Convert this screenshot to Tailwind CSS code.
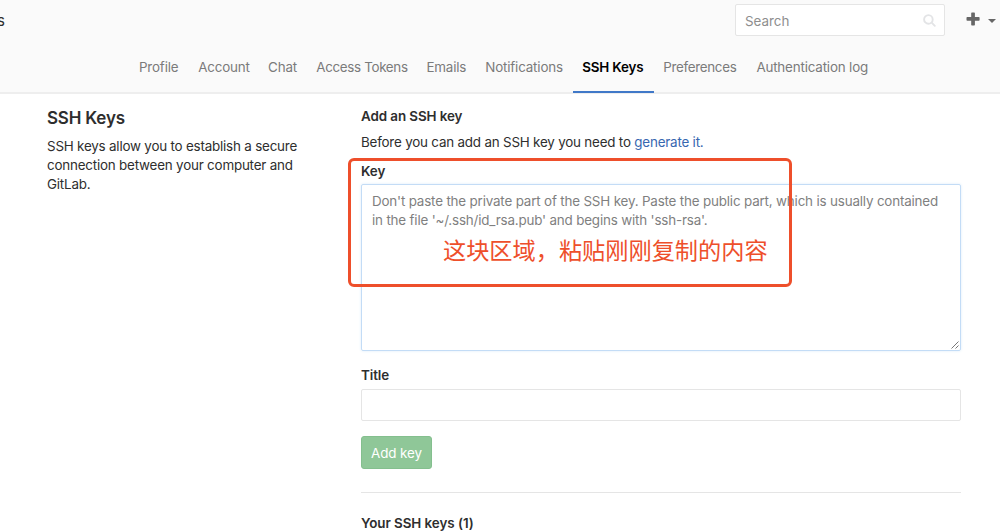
<!DOCTYPE html>
<html lang="en">
<head>
<meta charset="utf-8">
<title>SSH Keys</title>
<script src="https://cdn.jsdelivr.net/npm/@tailwindcss/browser@4"></script>
</head>
<body class="relative h-[532px] w-[1000px] overflow-hidden bg-white font-[Inter,'Noto_Sans_CJK_SC',sans-serif] text-[13.4px] leading-[19px] tracking-[-0.18px] text-[#2e2e2e]">
<header class="flex h-[94px] flex-col border-b-2 border-[#eeeeee] bg-[#fafafa]">
  <div class="flex h-[41px] shrink-0 items-center justify-between">
    <div class="-ml-[3px] text-[15px]">s</div>
    <div class="flex items-center">
      <div class="mt-[-1px] flex h-8 w-[210px] items-center justify-between rounded-[2px] border border-[#e5e5e5] bg-white pr-2 pl-[9px] text-[#8e8e8e]">
        <span class="pt-0.5 tracking-normal">Search</span>
        <svg class="size-[13px]" viewBox="0 0 13 13" fill="none" stroke="#e3e4e6" stroke-width="1.9" stroke-linecap="round"><circle cx="5.4" cy="5.4" r="4.3"/><path d="M8.7 8.7 11.8 11.8"/></svg>
      </div>
      <svg class="mt-[-4px] ml-[21px] size-[14px]" viewBox="0 0 14 14" fill="#666"><path d="M5.9.5h2.3q.7 0 .7.7v3.9h4q.7 0 .7.7v2.3q0 .7-.7.7h-4v4q0 .7-.7.7H5.9q-.7 0-.7-.7v-4H1.2q-.7 0-.7-.7V5.8q0-.7.7-.7h4V1.2q0-.7.7-.7Z"/></svg>
      <svg class="mr-[4px] ml-[8px] h-1 w-2" viewBox="0 0 8 4" fill="#666"><path d="M0 0h8L4 4Z"/></svg>
    </div>
  </div>
  <nav class="flex flex-1 gap-[19.2px] pl-[139px] text-[#7b7b7b]">
    <a class="w-[40px] pt-[17px] whitespace-nowrap">Profile</a>
    <a class="w-[50.7px] pt-[17px] whitespace-nowrap">Account</a>
    <a class="w-[29px] pt-[17px] whitespace-nowrap">Chat</a>
    <a class="w-[91px] pt-[17px] tracking-[-0.33px] whitespace-nowrap">Access Tokens</a>
    <a class="w-[39.7px] pt-[17px] whitespace-nowrap">Emails</a>
    <a class="w-[77.7px] pt-[17px] whitespace-nowrap">Notifications</a>
    <a class="mx-[-9.6px] -mb-px w-[81px] border-b-2 border-[#4078c8] pt-[17px] pl-[9.6px] font-semibold tracking-[-0.15px] whitespace-nowrap text-black">SSH Keys</a>
    <a class="w-[74px] pt-[17px] tracking-[-0.3px] whitespace-nowrap">Preferences</a>
    <a class="w-[112px] pt-[17px] whitespace-nowrap">Authentication log</a>
  </nav>
</header>
<main class="flex pl-[47px]">
  <section class="w-[314px] shrink-0 pt-[12px]">
    <h1 class="text-[17px] leading-6 font-semibold tracking-[-0.2px]">SSH Keys</h1>
    <p class="mt-[7px] tracking-[-0.2px] whitespace-nowrap">SSH keys allow you to establish a secure<br>connection between your computer and<br>GitLab.</p>
  </section>
  <section class="flex w-[600px] shrink-0 flex-col pt-[13px]">
    <h2 class="font-semibold tracking-[-0.08px]">Add an SSH key</h2>
    <p class="mt-[7px] tracking-[-0.2px]">Before you can add an SSH key you need to <a class="text-[#3767b0]">generate it.</a></p>
    <div class="mt-[10px] font-semibold tracking-[-0.08px]">Key</div>
    <div class="mt-[3px] flex h-[167px] flex-col justify-between rounded-[2px] border border-[#c3dcf6] pt-[7px] pl-[10px] whitespace-nowrap text-[#7f7f7f] shadow-[0_0_3px_#dcebfa]">
      <p class="tracking-[-0.175px]">Don't paste the private part of the SSH key. Paste the public part, which is usually contained<br>in the file '~/.ssh/id_rsa.pub' and begins with 'ssh-rsa'.</p>
      <svg class="mr-px mb-px size-2 self-end" viewBox="0 0 8 8" fill="none" stroke="#777" stroke-width="1"><path d="M.5 7.5 7.5.5M4.500 7.500l3-3"/></svg>
    </div>
    <div class="mt-[15px] font-semibold tracking-[-0.08px]">Title</div>
    <div class="mt-[4px] h-[32px] rounded-[2px] border border-[#e5e5e5]"></div>
    <button class="mt-[15px] h-[33px] w-[71px] rounded-[3px] border border-[#84bf8e] bg-[#8fc798] pt-px tracking-[-0.1px] text-white">Add key</button>
    <hr class="mt-[23px] border-[#e5e5e5]">
    <h2 class="mt-[21px] font-semibold tracking-[-0.05px]">Your SSH keys (1)</h2>
  </section>
</main>
<div class="absolute top-[158px] left-[348px] h-[129px] w-[444px] rounded-[6px] border-3 border-[#ee4f2b]"></div>
<div class="absolute top-[233px] left-[443px] text-[23.2px] leading-8 tracking-normal whitespace-nowrap text-[#ee4f2b] font-['Noto_Sans_CJK_SC',sans-serif]">这块区域，粘贴刚刚复制的内容</div>
</body>
</html>
